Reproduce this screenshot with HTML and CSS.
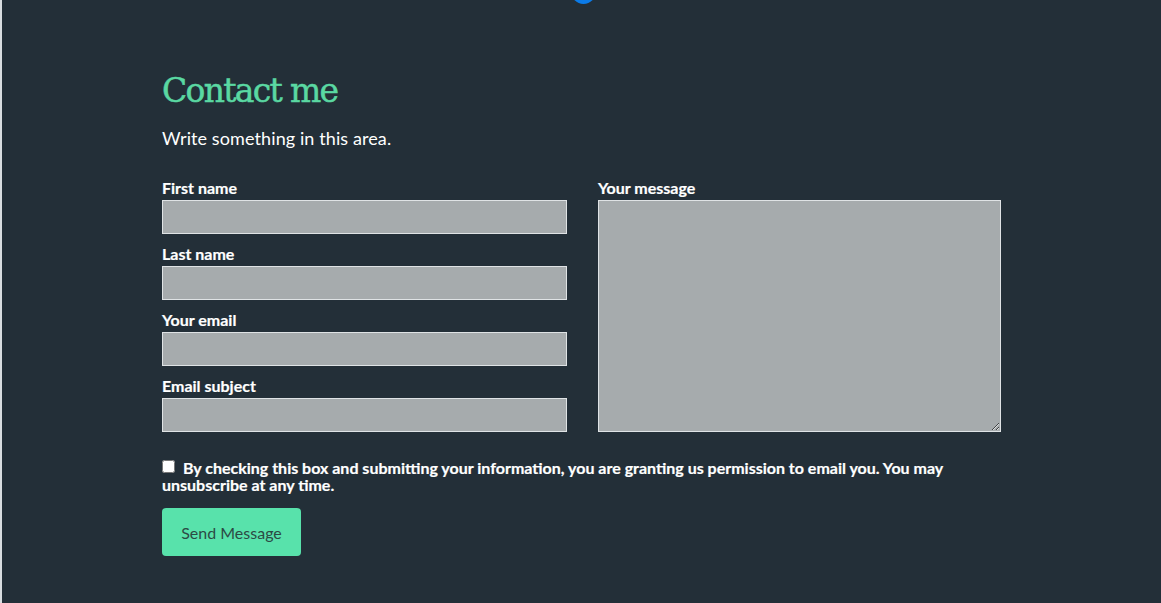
FILE: index.html
```html
<!DOCTYPE html>
<html lang="en">
<head>
<meta charset="utf-8">
<title>Contact me</title>
<link rel="stylesheet" href="styles.css">
</head>
<body>
<div class="page">
  <span class="dot"></span>
  <section class="contact">
    <h1 class="title">Contact me</h1>
    <p class="lead">Write something in this area.</p>
    <form class="form">
      <div class="grid">
        <div class="col">
          <label class="field"><span class="label">First name</span><input class="input" type="text"></label>
          <label class="field"><span class="label">Last name</span><input class="input" type="text"></label>
          <label class="field"><span class="label">Your email</span><input class="input" type="email"></label>
          <label class="field"><span class="label">Email subject</span><input class="input" type="text"></label>
        </div>
        <div class="col">
          <label class="field msg"><span class="label">Your message</span><textarea class="textarea"></textarea></label>
        </div>
      </div>
      <label class="consent"><input class="check" type="checkbox"> By checking this box and submitting your information, you are granting us permission to email you. You may unsubscribe at any time.</label>
      <button class="btn" type="button">Send Message</button>
    </form>
  </section>
</div>
</body>
</html>
```
FILE: styles.css
```css
html, body { margin: 0; padding: 0; height: 100%; }
body {
  background: #232f38;
  font-family: Lato, "Liberation Sans", sans-serif;
  color: #ffffff;
  border-left: 2px solid #d8dde0;
  box-sizing: border-box;
}
.page { position: relative; min-height: 100%; overflow: hidden; }
.dot {
  position: absolute;
  left: 569px;
  top: -21px;
  width: 25px;
  height: 25px;
  border-radius: 50%;
  background: #0b7be8;
}
.contact { width: 839px; margin-left: 160px; padding-top: 69px; }
.title {
  margin: 0;
  font-family: "DejaVu Serif", "Liberation Serif", serif;
  font-weight: normal;
  font-size: 33px;
  line-height: 44px;
  color: #5ad8a2;
  letter-spacing: -1.7px;
  -webkit-text-stroke: 0.5px #5ad8a2;
}
.lead { margin: 13px 0 0; font-size: 18px; line-height: 24px; letter-spacing: 0.1px; }
.form { margin-top: 30px; }
.grid { display: grid; grid-template-columns: 405px 403px; column-gap: 31px; }
.col { display: flex; flex-direction: column; }
.field { display: flex; flex-direction: column; margin-bottom: 12px; }
.label { font-weight: bold; font-size: 16px; line-height: 16px; padding-bottom: 4px; -webkit-text-stroke: 0.2px #fff; }
.input, .textarea {
  box-sizing: border-box;
  width: 100%;
  margin: 0;
  background: #a6abad;
  border: 1px solid #dfe3e5;
  font: inherit;
}
.input { height: 34px; }
.textarea { height: 232px; resize: vertical; display: block; }
.consent {
  display: block;
  margin-top: 15px;
  font-weight: bold;
  font-size: 16px;
  line-height: 17px;
  width: 839px;
  -webkit-text-stroke: 0.2px #fff;
}
.check { margin: 0 4px 0 0; width: 13px; height: 13px; vertical-align: 1px; }
.btn {
  display: block;
  margin-top: 15px;
  width: 139px;
  height: 48px;
  border: none;
  border-radius: 4px;
  background: #58e2ab;
  color: #2c4a45;
  font-family: Lato, "Liberation Sans", sans-serif;
  font-size: 16px;
}
```
